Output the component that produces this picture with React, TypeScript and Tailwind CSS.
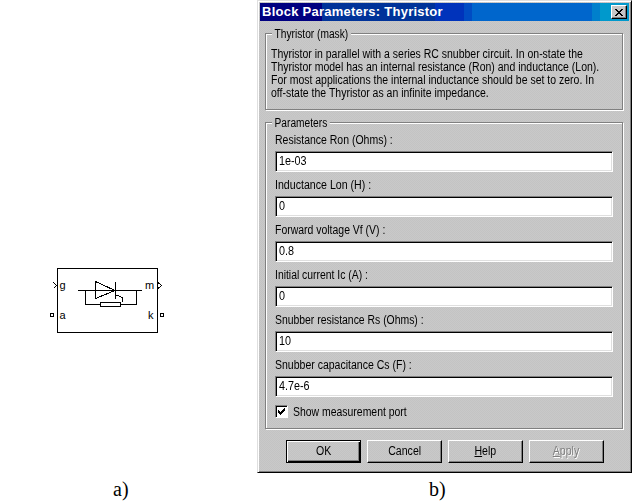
import React from "react";

const fields = [
  { label: "Resistance Ron (Ohms) :", value: "1e-03", scale: "scale-x-[0.874]" },
  { label: "Inductance Lon (H) :", value: "0", scale: "scale-x-[0.885]" },
  { label: "Forward voltage Vf (V) :", value: "0.8", scale: "scale-x-[0.871]" },
  { label: "Initial current Ic (A) :", value: "0", scale: "scale-x-[0.865]" },
  { label: "Snubber resistance Rs (Ohms) :", value: "10", scale: "scale-x-[0.867]" },
  { label: "Snubber capacitance Cs (F) :", value: "4.7e-6", scale: "scale-x-[0.876]" },
];

const face = "bg-[repeating-conic-gradient(#c3c3c3_0_25%,#c9c9c9_0_50%)] bg-[length:2px_2px]";

function Group({ title, className, children }: { title: string; className: string; children: React.ReactNode }) {
  return (
    <section className={`relative border border-[#808080] shadow-[1px_1px_0_#fff,inset_1px_1px_0_#fff] ${className}`}>
      <h2 className={`absolute left-[6px] top-[-7px] h-[14px] origin-left scale-x-[0.85] px-[3px] leading-[14px] ${face}`}>{title}</h2>
      {children}
    </section>
  );
}

const raised =
  "border border-t-white border-l-white border-r-black border-b-black shadow-[inset_-1px_-1px_0_#808080]";
const focused =
  "border border-black shadow-[inset_1px_1px_0_#fff,inset_-1px_-1px_0_#000,inset_-2px_-2px_0_#808080]";

function Button({ children, look = raised, className = "" }: { children: React.ReactNode; look?: string; className?: string }) {
  return (
    <button className={`flex h-[23px] w-[75px] items-center justify-center pb-px ${face} ${look} ${className}`}>
      <span className="block scale-x-[0.88]">{children}</span>
    </button>
  );
}

function Block() {
  return (
    <svg width="116" height="68" viewBox="49 266 116 68" shapeRendering="crispEdges" fill="none" stroke="#000">
      <rect x="57.5" y="268.5" width="100" height="64" />
      <path d="M78 290.5H142M85.5 290V304.5H100M121 304.5H136.5V290M115.5 282V299M95.5 281.5V298.5L115 290.5L95.5 281.5M115 294.5L122.5 297.5V302" />
      <rect x="100.5" y="302.5" width="20" height="4" />
      <path d="M53.5 282.5L56.5 285.5L53.5 288.5M158 282.5L161.5 285.5L158 288.5" />
      <rect x="50.5" y="313.5" width="3" height="3" />
      <rect x="160.5" y="313.5" width="3" height="3" />
      <g fill="#000" stroke="none" fontFamily="Liberation Sans, sans-serif" fontSize="11">
        <text x="59.5" y="289">g</text>
        <text x="145" y="289">m</text>
        <text x="59.5" y="319">a</text>
        <text x="148" y="319">k</text>
      </g>
    </svg>
  );
}

export default function App() {
  return (
    <main className="flex h-[504px] w-[632px] overflow-hidden bg-white font-['Liberation_Sans',Arial,sans-serif] text-[12px] text-black">
      <div className="flex w-[257px] shrink-0 flex-col pt-[266px]">
        <div className="pl-[49px]"><Block /></div>
        <p className="mt-[144px] pl-[113px] font-['Liberation_Serif',serif] text-[20px] leading-[22px]">a)</p>
      </div>
      <div className="w-[375px] shrink-0">
        <div className={`flex h-[473px] flex-col border border-t-[#dfdfdf] border-l-[#dfdfdf] border-r-black border-b-black px-[2px] pt-[2px] shadow-[inset_1px_1px_0_#fff,inset_-1px_-1px_0_#808080] ${face}`}>
          <header className="flex h-[18px] shrink-0 items-center justify-between bg-[linear-gradient(90deg,#000080_0_62px,#003399_62px_175px,#0033bb_175px_204px,#004cc3_204px_212px,#0066cc_212px_332px,#0080cc_332px_340px,#0099cc_340px)] pl-[2px] pr-[2px]">
            <h1 className="whitespace-nowrap text-[13px] font-bold leading-[18px] tracking-[0.25px] text-white">Block Parameters: Thyristor</h1>
            <button className={`flex h-[14px] w-[16px] shrink-0 items-center justify-center ${face} ${raised}`}>
              <svg width="8" height="7" viewBox="0 0 8 7" shapeRendering="crispEdges" fill="#000">
                <path d="M0 0h2v1h-2zM6 0h2v1h-2zM1 1h2v1h-2zM5 1h2v1h-2zM2 2h4v1h-4zM3 3h2v1h-2zM2 4h4v1h-4zM1 5h2v1h-2zM5 5h2v1h-2zM0 6h2v1h-2zM6 6h2v1h-2z" />
              </svg>
            </button>
          </header>
          <Group title="Thyristor (mask)" className="ml-[5px] mt-[12px] h-[77px] w-[358px] shrink-0 pl-[5px] pt-[14px]">
            <div className="origin-left scale-x-[0.874] whitespace-nowrap leading-[13px]">
              <p>Thyristor in parallel with a series RC snubber circuit. In on-state the</p>
              <p>Thyristor model has an internal resistance (Ron) and inductance (Lon).</p>
              <p>For most applications the internal inductance should be set to zero. In</p>
              <p>off-state the Thyristor as an infinite impedance.</p>
            </div>
          </Group>
          <Group title="Parameters" className="ml-[5px] mt-[12px] h-[307px] w-[358px] shrink-0 pl-[9px] pt-[10px]">
            {fields.map((f) => (
              <div key={f.label} className="h-[45px]">
                <label className={`block h-[18px] origin-left whitespace-nowrap leading-[14px] ${f.scale}`}>{f.label}</label>
                <div className="flex h-[21px] w-[338px] items-center border border-b-[#fff] border-l-[#808080] border-r-[#fff] border-t-[#808080] bg-white pb-[2px] pl-[3px] shadow-[inset_1px_1px_0_#000,inset_-1px_-1px_0_#dfdfdf]">
                  <span className="origin-left scale-x-[0.9]">{f.value}</span>
                </div>
              </div>
            ))}
            <label className="mt-[2px] flex h-[13px] items-center gap-[5px]">
              <span className="flex h-[13px] w-[13px] items-center justify-center border border-b-white border-l-[#808080] border-r-white border-t-[#808080] bg-white shadow-[inset_1px_1px_0_#000]">
                <svg width="7" height="7" viewBox="0 0 7 7" shapeRendering="crispEdges">
                  <path d="M0 2h1v1h1v1h1v-1h1v-1h1v-1h1v-1h1v3h-1v1h-1v1h-1v1h-1v1h-1v-1h-1v-1h-1z" />
                </svg>
              </span>
              <span className="origin-left scale-x-[0.87]">Show measurement port</span>
            </label>
          </Group>
          <footer className="ml-[26px] mt-[11px] flex gap-[6px]">
            <Button look={focused}>OK</Button>
            <Button>Cancel</Button>
            <Button><u>H</u>elp</Button>
            <Button className="text-[#808080] [text-shadow:1px_1px_0_#fff]"><u>A</u>pply</Button>
          </footer>
        </div>
        <p className="mt-[5px] pl-[172px] font-['Liberation_Serif',serif] text-[20px] leading-[22px]">b)</p>
      </div>
    </main>
  );
}
